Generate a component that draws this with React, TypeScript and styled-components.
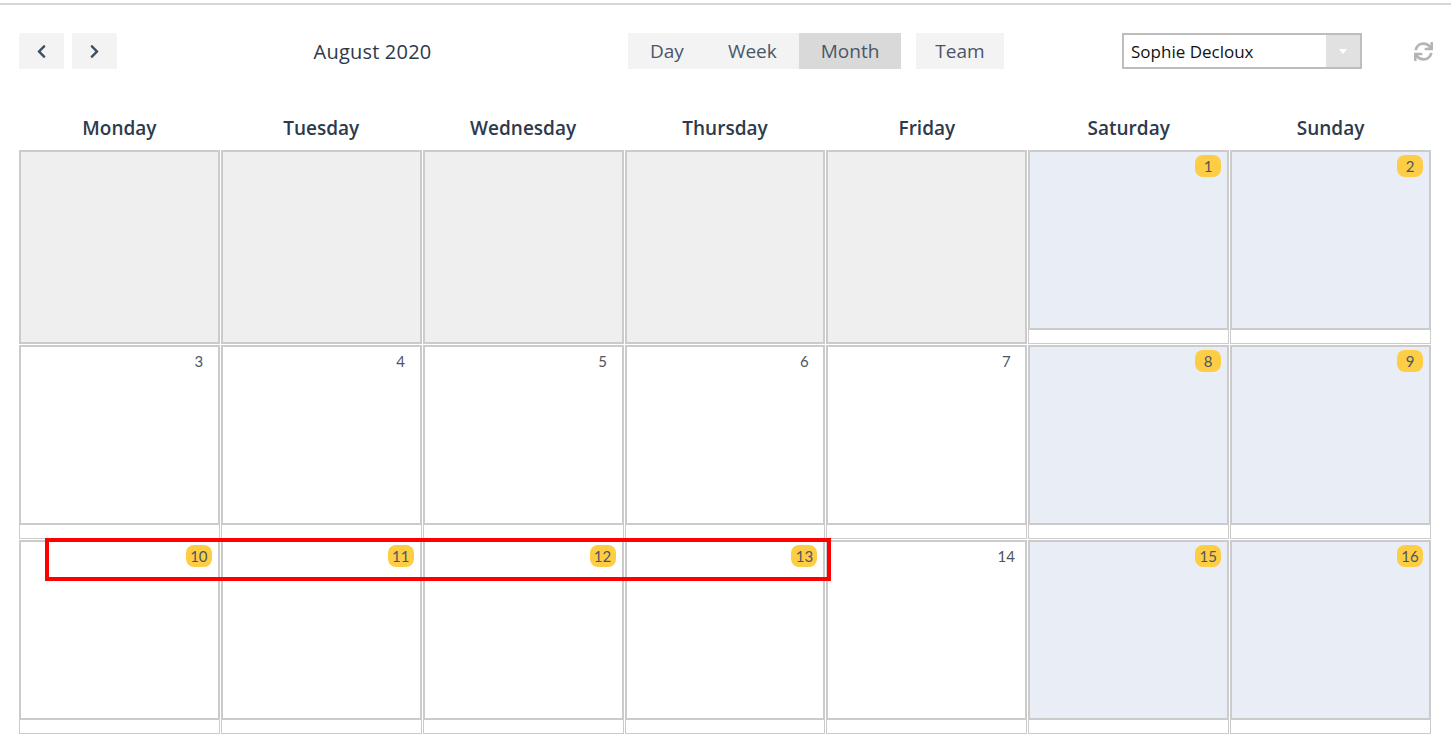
import React from "react";
import styled, { createGlobalStyle } from "styled-components";
import { FaChevronLeft, FaChevronRight, FaSync } from "react-icons/fa";

const GlobalStyle = createGlobalStyle`
    html, body {
        margin: 0;
        padding: 0;
        background: #fff;
        font-family: "Open Sans", "Liberation Sans", sans-serif;
        color: #2d3a4b;
        overflow: hidden;
    }
`

const Page = styled.div`
    display: flex;
    flex-direction: column;
    width: 1451px;
`

const TopLine = styled.div`
    height: 2px;
    margin-top: 3px;
    background: #d6d6da;
`

const Toolbar = styled.div`
    display: flex;
    align-items: center;
    height: 36px;
    margin-top: 28px;
    padding: 0 18px 0 19px;
`

const NavGroup = styled.div`
    display: flex;
    gap: 8px;
`

const NavButton = styled.button`
    display: flex;
    align-items: center;
    justify-content: center;
    width: 45px;
    height: 36px;
    padding: 0;
    border: none;
    border-radius: 2px;
    background: #f3f3f3;
    color: #3e4e62;
    cursor: pointer;
`

const Title = styled.div`
    width: 511px;
    text-align: center;
    font-size: 20px;
    color: #2d3a4b;
    letter-spacing: 0.2px;
`

const ViewGroup = styled.div`
    display: flex;
    height: 36px;
    background: #f3f3f3;
`

const ViewButton = styled.button<{ active?: boolean }>`
    height: 36px;
    padding: 0 22px;
    border: none;
    background: ${ p => p.active ? '#d9d9d9' : 'transparent' };
    font-family: inherit;
    font-size: 19px;
    color: #4a5668;
    cursor: pointer;
`

const TeamButton = styled(ViewButton)`
    margin-left: 15px;
    background: #f3f3f3;
    padding: 0 19px;
`

const Select = styled.div`
    display: flex;
    align-items: stretch;
    margin-left: auto;
    width: 236px;
    height: 32px;
    border: 2px solid #bdbdbd;
    background: #fff;
`

const SelectValue = styled.div`
    flex: 1;
    display: flex;
    align-items: center;
    padding-left: 7px;
    font-size: 17px;
    color: #111;
`

const SelectArrow = styled.div`
    width: 34px;
    display: flex;
    align-items: center;
    justify-content: center;
    background: #e1e1e1;

    &::after {
        content: "";
        border-left: 4px solid transparent;
        border-right: 4px solid transparent;
        border-top: 5px solid #fff;
    }
`

const RefreshButton = styled.div`
    display: flex;
    margin-left: 52px;
    color: #b4b4b4;
`

const Calendar = styled.div`
    display: flex;
    flex-direction: column;
    padding: 0 20px 0 19px;
`

const DayHeader = styled.div`
    display: grid;
    grid-template-columns: repeat(7, 1fr);
    column-gap: 1px;
    margin-top: 41px;
    height: 40px;
`

const DayName = styled.div`
    text-align: center;
    font-size: 19px;
    font-weight: 600;
    color: #2d3a4b;
    line-height: 36px;
`

const Week = styled.div`
    position: relative;
    display: grid;
    grid-template-columns: repeat(7, 1fr);
    column-gap: 1px;
    height: 194px;
    & + & {
        margin-top: 1px;
    }
`

type Kind = 'outside' | 'weekday' | 'weekend'

const cellColors: Record<Kind, string> = {
    outside: '#efefef',
    weekday: '#ffffff',
    weekend: '#e9eef6',
}

const Cell = styled.div`
    display: flex;
    flex-direction: column;
    min-width: 0;
`

const CellBody = styled.div<{ kind: Kind }>`
    flex: 1;
    display: flex;
    justify-content: flex-end;
    align-items: flex-start;
    padding: 3px 6px 0 0;
    border: 2px solid #cbcbcb;
    background: ${ p => cellColors[p.kind] };
`

const CellFooter = styled.div`
    height: 13px;
    border: 1px solid #cbcbcb;
    border-top: none;
    background: #fff;
`

const DayNumber = styled.div<{ highlight?: boolean }>`
    min-width: 26px;
    height: 22px;
    padding: 0 4px;
    box-sizing: border-box;
    border-radius: 8px;
    background: ${ p => p.highlight ? '#fecd46' : 'transparent' };
    font-family: "Lato", "Liberation Sans", sans-serif;
    font-size: 15px;
    line-height: 22px;
    text-align: center;
    color: #4f5560;
`

const Marker = styled.div`
    position: absolute;
    left: 26px;
    top: -2px;
    width: 786px;
    height: 43px;
    box-sizing: border-box;
    border: 4px solid #ff0000;
    pointer-events: none;
`

const dayNames = ['Monday', 'Tuesday', 'Wednesday', 'Thursday', 'Friday', 'Saturday', 'Sunday']

type Day = { num?: number, kind: Kind, highlight?: boolean }

const weeks: Day[][] = [
    [
        { kind: 'outside' }, { kind: 'outside' }, { kind: 'outside' }, { kind: 'outside' }, { kind: 'outside' },
        { num: 1, kind: 'weekend', highlight: true }, { num: 2, kind: 'weekend', highlight: true },
    ],
    [
        { num: 3, kind: 'weekday' }, { num: 4, kind: 'weekday' }, { num: 5, kind: 'weekday' },
        { num: 6, kind: 'weekday' }, { num: 7, kind: 'weekday' },
        { num: 8, kind: 'weekend', highlight: true }, { num: 9, kind: 'weekend', highlight: true },
    ],
    [
        { num: 10, kind: 'weekday', highlight: true }, { num: 11, kind: 'weekday', highlight: true },
        { num: 12, kind: 'weekday', highlight: true }, { num: 13, kind: 'weekday', highlight: true },
        { num: 14, kind: 'weekday' },
        { num: 15, kind: 'weekend', highlight: true }, { num: 16, kind: 'weekend', highlight: true },
    ],
]

export default function App () {
    return (
        <Page>
            <GlobalStyle/>
            <TopLine/>
            <Toolbar>
                <NavGroup>
                    <NavButton><FaChevronLeft size={ 15 }/></NavButton>
                    <NavButton><FaChevronRight size={ 15 }/></NavButton>
                </NavGroup>
                <Title>August 2020</Title>
                <ViewGroup>
                    <ViewButton>Day</ViewButton>
                    <ViewButton>Week</ViewButton>
                    <ViewButton active>Month</ViewButton>
                </ViewGroup>
                <TeamButton>Team</TeamButton>
                <Select>
                    <SelectValue>Sophie Decloux</SelectValue>
                    <SelectArrow/>
                </Select>
                <RefreshButton><FaSync size={ 19 }/></RefreshButton>
            </Toolbar>
            <Calendar>
                <DayHeader>
                    { dayNames.map(name => <DayName key={ name }>{ name }</DayName>) }
                </DayHeader>
                { weeks.map((week, wi) => (
                    <Week key={ wi }>
                        { week.map((day, di) => (
                            <Cell key={ di }>
                                <CellBody kind={ day.kind }>
                                    { day.num &&
                                    <DayNumber highlight={ day.highlight }>{ day.num }</DayNumber> }
                                </CellBody>
                                { day.kind != 'outside' &&
                                <CellFooter/> }
                            </Cell>
                        )) }
                        { wi == 2 &&
                        <Marker/> }
                    </Week>
                )) }
            </Calendar>
        </Page>
    )
}
